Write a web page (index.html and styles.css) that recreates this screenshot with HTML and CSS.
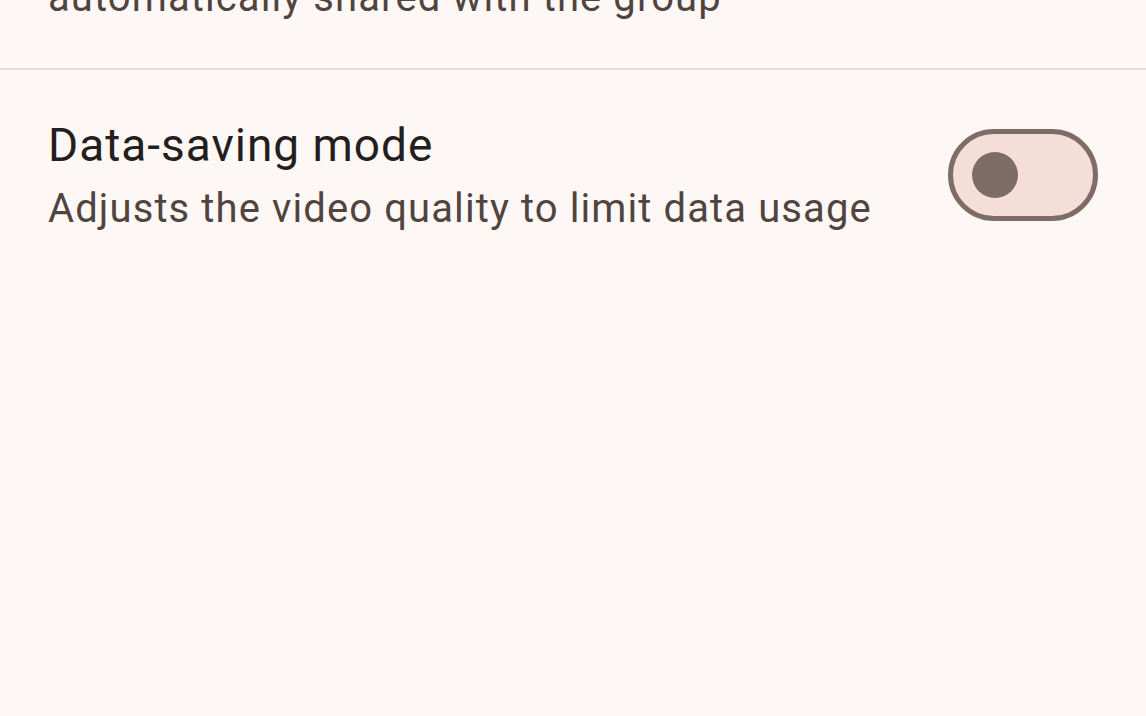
FILE: index.html
```html
<!doctype html>
<html>
<head>
    <meta charset="UTF-8">
    <title>Settings</title>
    <link rel="stylesheet" href="styles.css">
</head>
<body>
<div class="prefs">
    <div class="pref pref-cut">
        <div class="pref-text">
            <p class="pref-summary">automatically shared with the group</p>
        </div>
    </div>
    <hr class="divider">
    <div class="pref">
        <div class="pref-text">
            <p class="pref-title">Data-saving mode</p>
            <p class="pref-summary">Adjusts the video quality to limit data usage</p>
        </div>
        <label class="switch">
            <input type="checkbox">
            <span class="thumb"></span>
        </label>
    </div>
</div>
</body>
</html>
```

FILE: styles.css
```css
html, body {
    margin: 0;
    background-color: #fdf8f5;
}
body {
    font-family: Roboto, "Noto Sans", sans-serif;
    width: 1146px;
    height: 716px;
    overflow: hidden;
}
.prefs {
    margin-top: -32px;
}
.pref {
    display: flex;
    align-items: center;
    justify-content: space-between;
    padding: 45px 48px 40px;
}
.pref-cut {
    padding-top: 0;
}
.pref-text p {
    margin: 0;
}
.pref-title {
    font-size: 46px;
    line-height: 60px;
    color: #241e1c;
    letter-spacing: 1px;
}
.pref-title + .pref-summary {
    margin-top: 4px;
}
.pref-summary {
    font-size: 40px;
    line-height: 60px;
    color: #51443f;
    letter-spacing: 1.1px;
}
.divider {
    margin: 0;
    border: 0;
    height: 2px;
    background-color: #e4dedb;
}
.switch {
    box-sizing: border-box;
    width: 150px;
    height: 92px;
    margin-bottom: 5px;
    border: 5px solid #7e6c67;
    border-radius: 46px;
    background-color: #f5ded7;
    display: flex;
    align-items: center;
    padding-left: 19px;
}
.switch input {
    display: none;
}
.thumb {
    width: 46px;
    height: 46px;
    border-radius: 50%;
    background-color: #7e6c67;
}
```
